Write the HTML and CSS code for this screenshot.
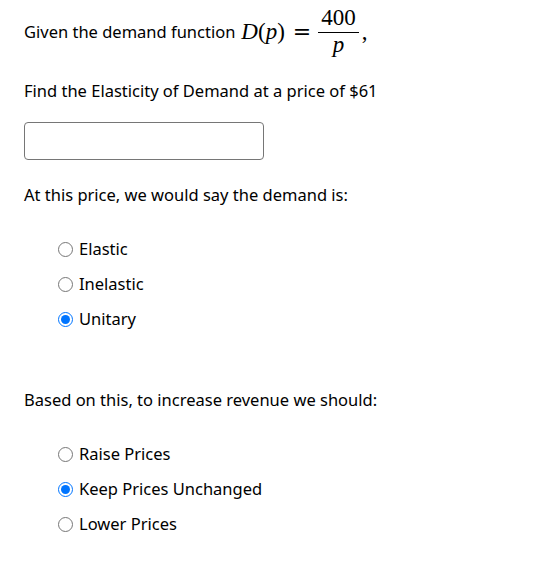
FILE: index.html
```html
<!DOCTYPE html>
<html lang="en">
<head>
    <meta charset="UTF-8">
    <meta name="viewport" content="width=device-width, initial-scale=1.0">
    <title>Elasticity of Demand</title>
    <link rel="stylesheet" href="styles.css">
</head>
<body>
    <div class="question">
        <p class="intro">
            Given the demand function
            <span class="math">
                <span class="mi">D</span><span class="mo">(</span><span class="mi">p</span><span class="mo">)</span>
                <span class="eq">=</span>
                <span class="frac">
                    <span class="num">400</span>
                    <span class="den mi">p</span>
                </span><span class="comma">,</span>
            </span>
        </p>

        <p class="prompt">Find the Elasticity of Demand at a price of $61</p>

        <input type="text" class="answer" id="elasticity">

        <p class="prompt">At this price, we would say the demand is:</p>

        <div class="choices">
            <label class="choice"><input type="radio" name="demand"> Elastic</label>
            <label class="choice"><input type="radio" name="demand"> Inelastic</label>
            <label class="choice"><input type="radio" name="demand" checked> Unitary</label>
        </div>

        <p class="prompt later">Based on this, to increase revenue we should:</p>

        <div class="choices">
            <label class="choice"><input type="radio" name="revenue"> Raise Prices</label>
            <label class="choice"><input type="radio" name="revenue" checked> Keep Prices Unchanged</label>
            <label class="choice"><input type="radio" name="revenue"> Lower Prices</label>
        </div>
    </div>
</body>
</html>
```

FILE: styles.css
```css
body {
    margin: 0;
    padding: 0;
    background-color: #fff;
    color: #000;
    font-family: "Noto Sans", "DejaVu Sans", sans-serif;
    font-size: 16.5px;
}
.question {
    padding: 8px 24px;
}
p {
    margin: 0;
    line-height: 20px;
}
.intro {
    display: flex;
    align-items: center;
    height: 48px;
}
.math {
    display: inline-flex;
    align-items: center;
    margin-left: 6px;
    font-family: "Liberation Serif", serif;
    font-size: 23px;
}
.mi {
    font-style: italic;
}
.eq {
    margin: 0 5px 0 8px;
    font-family: "DejaVu Serif", serif;
    font-size: 22px;
}
.frac {
    display: inline-flex;
    flex-direction: column;
    align-items: center;
    padding: 0 2px;
}
.num {
    line-height: 22px;
    padding: 0 3px 3px;
    border-bottom: 1px solid #000;
}
.den {
    line-height: 24px;
    font-style: italic;
}
.comma {
    align-self: center;
    margin-left: 1px;
}
.prompt {
    margin-top: 25px;
}
.answer {
    display: block;
    box-sizing: border-box;
    width: 240px;
    height: 38px;
    margin: 21px 0 24px;
    border: 1px solid #767676;
    border-radius: 4px;
}
.choices {
    display: flex;
    flex-direction: column;
    gap: 15px;
    margin-top: 34px;
    padding-left: 34px;
}
.choice {
    display: flex;
    align-items: center;
    line-height: 20px;
}
.choice input {
    width: 15px;
    height: 15px;
    margin: 0 6px 0 0;
    accent-color: #0075ff;
}
.later {
    margin-top: 61px;
}
```
